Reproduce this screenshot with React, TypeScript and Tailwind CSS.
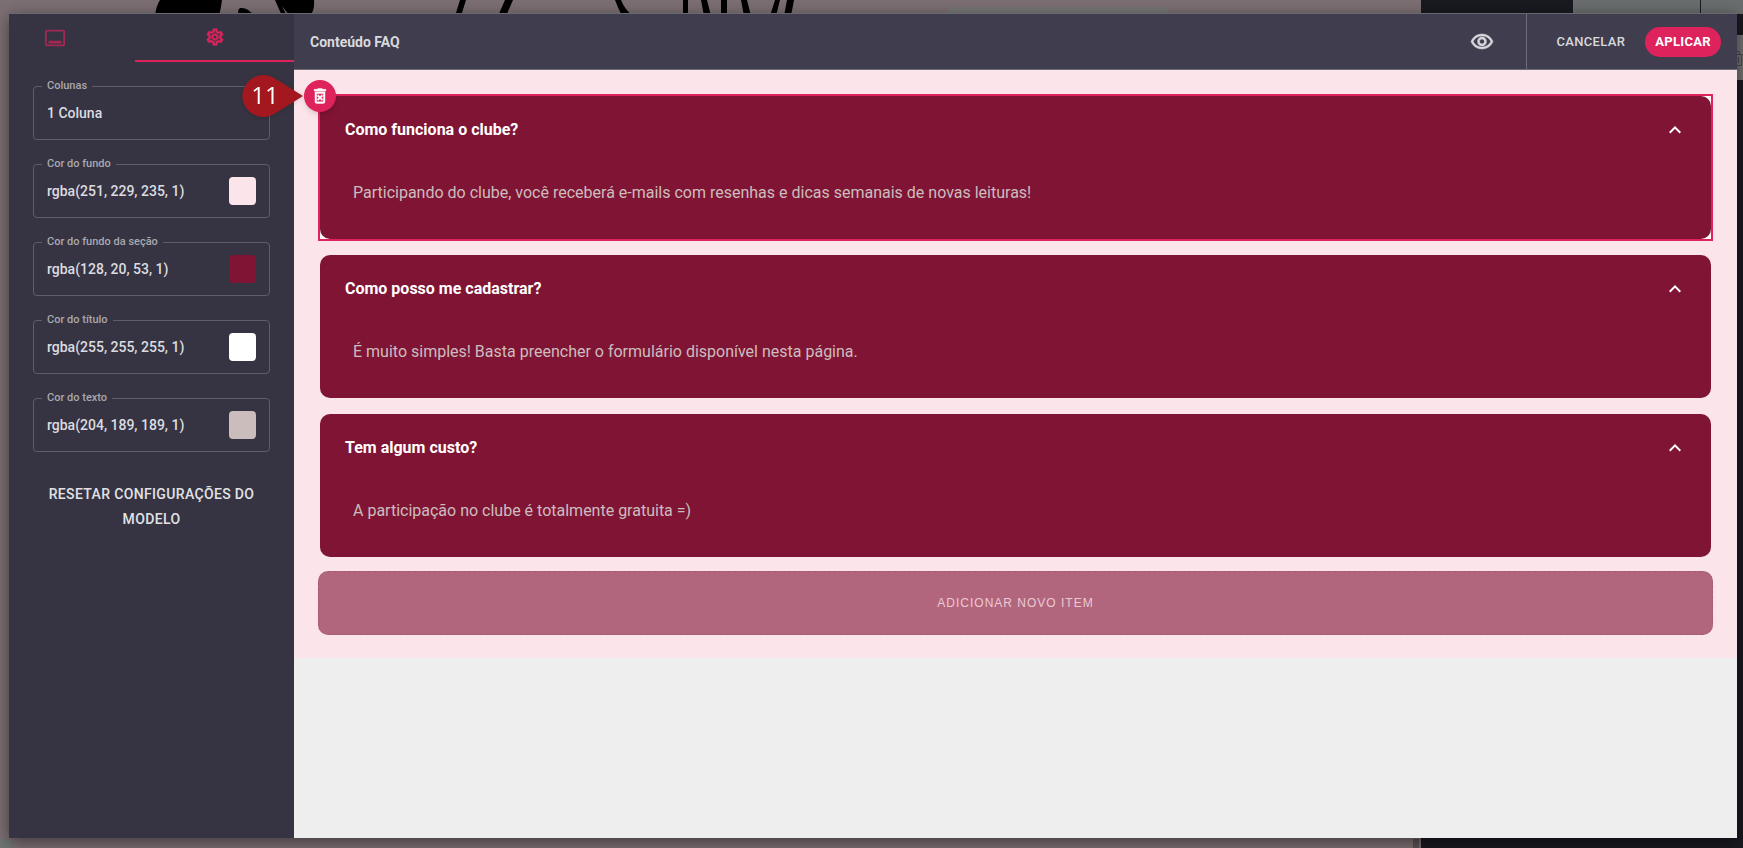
import { useState } from "react";
import {
  MdExpandLess,
  MdOutlineCallToAction,
  MdOutlineDeleteForever,
  MdOutlineSettings,
  MdOutlineVisibility,
} from "react-icons/md";

type ColorField = {
  id: string;
  label: string;
  value: string;
};

type FaqItem = {
  title: string;
  text: string;
};

const COLOR_FIELDS: ColorField[] = [
  { id: "background", label: "Cor do fundo", value: "rgba(251, 229, 235, 1)" },
  { id: "section", label: "Cor do fundo da seção", value: "rgba(128, 20, 53, 1)" },
  { id: "title", label: "Cor do título", value: "rgba(255, 255, 255, 1)" },
  { id: "text", label: "Cor do texto", value: "rgba(204, 189, 189, 1)" },
];

const FAQ_ITEMS: FaqItem[] = [
  {
    title: "Como funciona o clube?",
    text: "Participando do clube, você receberá e-mails com resenhas e dicas semanais de novas leituras!",
  },
  {
    title: "Como posso me cadastrar?",
    text: "É muito simples! Basta preencher o formulário disponível nesta página.",
  },
  {
    title: "Tem algum custo?",
    text: "A participação no clube é totalmente gratuita =)",
  },
];

// Dimmed page editor that stays visible around the dialog
function Backdrop() {
  return (
    <div className="absolute inset-0 flex bg-[#7d7074]" aria-hidden="true">
      <div className="relative flex flex-1 flex-col justify-between overflow-hidden">
        <svg className="h-4 w-[860px]" viewBox="0 0 860 16">
          <path d="M160 0h62q-1 8-3 16h-64q1-10 5-16z" />
          <path d="M240 8q8-1 14 8h-14q-4-5 0-8zM277 0h37q1 10-4 16h-20zM275 0h4l8 16h-5z" />
          <path d="M460 0h6l-5 16h-6zM505 0h8l-7 16h-8zM615 0h6q4 10 12 16h-11q-4-8-7-16z" />
          <path d="M683 0h5v16h-5zM701 0h6l4 16h-7zM721 0h6v16h-6zM741 0h6l4 16h-7zM775 0h5l-4 16h-6zM787 0h7l-3 16h-7z" />
        </svg>
        <div className="absolute left-2/3 top-[7px] h-4 w-[220px] rounded-t bg-[#777876]" />
        <div className="flex h-[9px] justify-between">
          <div className="w-3.5 rounded-tr-sm bg-[#707472]" />
          <div className="mr-0.5 w-1.5 bg-[#5b5154]" />
        </div>
      </div>
      <div className="flex w-[322px] flex-col bg-[#191921]">
        <div className="ml-[152px] flex h-3.5 gap-px">
          <div className="w-[127px] bg-[#6b6e6e]" />
          <div className="flex-1 bg-[#6b6e6e]" />
        </div>
        <div className="mt-[21px] flex h-[45px] items-center justify-end bg-[#727373]">
          <svg width="6" height="16" viewBox="0 0 6 16" fill="none" stroke="#4a4b4d" strokeWidth="1">
            <path d="M0 1.500H2.500V4M0 4.500H6M4.500 5V15.500M1.500 7V13M0 15.500H4.500" />
          </svg>
        </div>
      </div>
    </div>
  );
}

function SettingsField({ field }: { field: ColorField }) {
  return (
    <div className="relative flex h-[54px] items-center rounded border border-[#5e5d69] px-[13px]">
      <label
        htmlFor={field.id}
        className="absolute -top-2 left-2 bg-[#363442] px-[5px] text-[11px] leading-[14px] font-medium text-[#a9a8ae]"
      >
        {field.label}
      </label>
      <input
        id={field.id}
        defaultValue={field.value}
        className="min-w-0 flex-1 bg-transparent text-sm font-medium text-[#dcdce0] outline-none"
      />
      <button
        type="button"
        aria-label={`Escolher ${field.label}`}
        className="h-7 w-[27px] shrink-0 rounded"
        style={{ backgroundColor: field.value }}
      />
    </div>
  );
}

function Sidebar() {
  return (
    <aside className="flex w-[285px] shrink-0 flex-col bg-[#363442]">
      <div className="flex h-12">
        <button
          type="button"
          aria-label="Conteúdo"
          className="flex w-[126px] items-center justify-center pr-[34px] text-[#dd225c]/65"
        >
          <MdOutlineCallToAction className="h-[22px] w-[22px]" />
        </button>
        <button
          type="button"
          aria-label="Configurações"
          className="flex flex-1 items-center justify-center border-b-2 border-[#dd225c] text-[#dd225c]"
        >
          <MdOutlineSettings className="h-5 w-5 stroke-current stroke-[0.8] [&>path:first-child]:stroke-none" />
        </button>
      </div>

      <div className="flex flex-col gap-6 px-6 pt-6">
        <div className="relative flex h-[54px] items-center rounded border border-[#5e5d69] px-[13px]">
          <label
            htmlFor="columns"
            className="absolute -top-2 left-2 bg-[#363442] px-[5px] text-[11px] leading-[14px] font-medium text-[#a9a8ae]"
          >
            Colunas
          </label>
          <select
            id="columns"
            className="w-full appearance-none bg-transparent text-sm font-medium text-[#dcdce0] outline-none"
          >
            <option>1 Coluna</option>
            <option>2 Colunas</option>
          </select>
          <HintMarker />
        </div>
        {COLOR_FIELDS.map((field) => (
          <SettingsField key={field.id} field={field} />
        ))}
        <button
          type="button"
          className="mt-1.5 text-center text-sm leading-[25px] font-medium tracking-wide text-[#e2e2e6] uppercase"
        >
          Resetar configurações do modelo
        </button>
      </div>
    </aside>
  );
}

function HintMarker() {
  return (
    <div className="pointer-events-none absolute -top-[13px] -right-[35px] z-20 h-[44px] w-[62px] drop-shadow-sm">
      <svg className="absolute inset-0" width="62" height="44" viewBox="0 0 62 44" aria-hidden="true">
        <path d="M61 22L33 39.500A21 21 0 1 1 33 4.500Z" fill="#a3181e" />
      </svg>
      <span className="relative block w-[46px] text-center font-['Open_Sans',sans-serif] text-2xl leading-[42px] text-white">
        11
      </span>
    </div>
  );
}

function FaqCard({ item, selected }: { item: FaqItem; selected: boolean }) {
  const [open, setOpen] = useState(true);

  return (
    <div className={selected ? "relative border-2 border-[#dd225c] bg-white" : "relative border-2 border-transparent"}>
      <div className="rounded-[10px] bg-[#801435]">
        <button
          type="button"
          onClick={() => setOpen(!open)}
          className="flex h-[68px] w-full items-center justify-between pr-6 pl-[25px] text-left text-base font-bold text-white"
        >
          {item.title}
          <MdExpandLess className="h-6 w-6" />
        </button>
        {open && <p className="h-[75px] px-[33px] pt-[17px] text-base text-[#ccbdbd]">{item.text}</p>}
      </div>
      {selected && (
        <button
          type="button"
          aria-label="Excluir item"
          className="absolute -top-4 -left-4 flex h-8 w-8 items-center justify-center rounded-full bg-[#dd225c] text-white shadow-md"
        >
          <MdOutlineDeleteForever className="h-5 w-5 stroke-current stroke-[0.5] [&>path:first-child]:stroke-none" />
        </button>
      )}
    </div>
  );
}

export default function App() {
  return (
    <div className="relative flex min-h-screen overflow-hidden pt-[13px] pr-1.5 pb-2.5 pl-[9px] font-[Roboto,sans-serif]">
      <Backdrop />
      <div
        role="dialog"
        aria-label="Conteúdo FAQ"
        className="relative flex flex-1 border-t border-[#69676f] shadow-[0_4px_16px_rgba(0,0,0,0.5)]"
      >
        <div className="relative z-10 flex">
          <Sidebar />
        </div>
        <div className="flex min-w-0 flex-1 flex-col bg-[#eeeeee]">
          <header className="flex h-14 items-center border-b border-[#6e6b7a] bg-[#403e4e] px-4">
            <h1 className="flex-1 text-sm font-bold text-[#d9d9dd]">Conteúdo FAQ</h1>
            <button type="button" aria-label="Visualizar" className="mr-8 text-[#d9d9dd]">
              <MdOutlineVisibility className="h-6 w-6 stroke-current stroke-[0.5] [&>path:first-child]:stroke-none" />
            </button>
            <div className="flex h-full items-center gap-5 border-l border-[#6e6b7a] pl-[29px]">
              <button type="button" className="text-[13px] font-medium tracking-wide text-[#d9d9dd] uppercase">
                Cancelar
              </button>
              <button
                type="button"
                className="h-[30px] rounded-full bg-[#dd225c] px-2.5 text-[13px] font-bold tracking-wide text-white uppercase"
              >
                Aplicar
              </button>
            </div>
          </header>

          <section className="bg-[#fbe5eb] px-6 pt-6 pb-[23px]">
            <div className="flex flex-col gap-3">
              {FAQ_ITEMS.map((item, index) => (
                <FaqCard key={item.title} item={item} selected={index === 0} />
              ))}
            </div>
            <button
              type="button"
              className="mt-3 h-16 w-full rounded-[10px] border border-dashed border-[#a85b75] bg-[#b1667d] font-['Liberation_Sans',sans-serif] text-xs tracking-[1px] text-[#edc9d3] uppercase"
            >
              Adicionar novo item
            </button>
          </section>
        </div>
      </div>
    </div>
  );
}
